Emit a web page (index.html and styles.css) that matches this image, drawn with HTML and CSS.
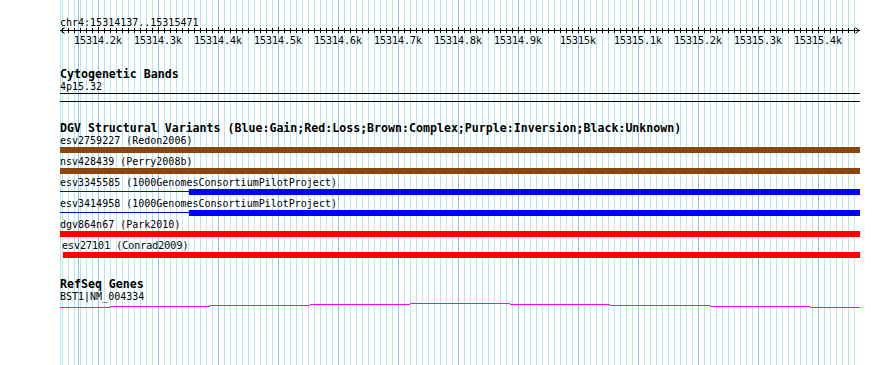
FILE: index.html
```html
<!DOCTYPE html>
<html lang="en">
<head>
    <meta charset="UTF-8">
    <title>chr4:15314137..15315471</title>
    <link rel="stylesheet" href="styles.css">
</head>
<body>
    <div class="browser">
        <div class="panel">
            <!-- Ruler -->
            <div class="ruler">
                <div class="ruler-name">chr4:15314137..15315471</div>
                <svg class="axis" width="800" height="8" viewBox="0 0 800 8">
                    <defs>
                        <pattern id="minorTicks" patternUnits="userSpaceOnUse" x="2" y="0" width="6" height="8">
                            <rect x="0" y="2" width="1" height="5" fill="#000"/>
                        </pattern>
                        <pattern id="majorTicks" patternUnits="userSpaceOnUse" x="38" y="0" width="60" height="8">
                            <rect x="0" y="1" width="1" height="6" fill="#000"/>
                        </pattern>
                    </defs>
                    <rect x="2" y="0" width="796" height="8" fill="url(#minorTicks)"/>
                    <rect x="2" y="0" width="796" height="8" fill="url(#majorTicks)"/>
                    <rect x="0" y="4" width="800" height="1" fill="#000"/>
                    <path d="M4.5 1.5L1 4.5L4.5 7.5M795.5 1.5L799 4.5L795.5 7.5" fill="none" stroke="#000"/>
                </svg>
                <div class="tick-labels">
                    <span>15314.2k</span>
                    <span>15314.3k</span>
                    <span>15314.4k</span>
                    <span>15314.5k</span>
                    <span>15314.6k</span>
                    <span>15314.7k</span>
                    <span>15314.8k</span>
                    <span>15314.9k</span>
                    <span>15315k</span>
                    <span>15315.1k</span>
                    <span>15315.2k</span>
                    <span>15315.3k</span>
                    <span>15315.4k</span>
                </div>
            </div>

            <!-- Cytogenetic Bands -->
            <div class="track cytobands">
                <div class="track-title">Cytogenetic Bands</div>
                <div class="feature-label">4p15.32</div>
                <div class="band"></div>
            </div>

            <!-- DGV -->
            <div class="track dgv">
                <div class="track-title">DGV Structural Variants (Blue:Gain;Red:Loss;Brown:Complex;Purple:Inversion;Black:Unknown)</div>
                <div class="feature">
                    <div class="feature-label">esv2759227 (Redon2006)</div>
                    <div class="bar complex"></div>
                </div>
                <div class="feature">
                    <div class="feature-label">nsv428439 (Perry2008b)</div>
                    <div class="bar complex"></div>
                </div>
                <div class="feature">
                    <div class="feature-label">esv3345585 (1000GenomesConsortiumPilotProject)</div>
                    <div class="bar gain">
                        <div class="stem"></div>
                        <div class="block"></div>
                    </div>
                </div>
                <div class="feature">
                    <div class="feature-label">esv3414958 (1000GenomesConsortiumPilotProject)</div>
                    <div class="bar gain">
                        <div class="stem"></div>
                        <div class="block"></div>
                    </div>
                </div>
                <div class="feature">
                    <div class="feature-label">dgv864n67 (Park2010)</div>
                    <div class="bar loss"></div>
                </div>
                <div class="feature shifted">
                    <div class="feature-label">esv27101 (Conrad2009)</div>
                    <div class="bar loss"></div>
                </div>
            </div>

            <!-- RefSeq -->
            <div class="track refseq">
                <div class="track-title">RefSeq Genes</div>
                <div class="feature-label">BST1|NM_004334</div>
                <svg class="gene" width="800" height="5" viewBox="0 0 800 5">
                    <path d="M0 4.5H50M50 3.5H150M150 2.5H250M250 1.5H350M350 0.5H450M450 1.5H550M550 2.5H650M650 3.5H750M750 4.5H800" fill="none" stroke="#f0f" stroke-width="1"/>
                </svg>
            </div>
        </div>
    </div>
</body>
</html>
```

FILE: styles.css
```css
body {
    margin: 0;
    background: #fff;
    color: #000;
    font-family: "DejaVu Sans Mono", "Liberation Mono", monospace;
    font-size: 10px;
    line-height: 13px;
}
.browser {
    width: 890px;
    height: 365px;
    padding-left: 60px;
    box-sizing: border-box;
    overflow: hidden;
}
.panel {
    width: 800px;
    height: 365px;
    white-space: nowrap;
    background-image:
        repeating-linear-gradient(to right, #8cc4ea 0 1px, transparent 1px 60px),
        repeating-linear-gradient(to right, #b2eaea 0 1px, transparent 1px 6px);
    background-position: 38px 0, 2px 0;
}

/* ruler */
.ruler {
    padding-top: 16px;
}
.ruler-name {
    height: 10px;
}
.axis {
    display: block;
    shape-rendering: crispEdges;
}
.axis path {
    shape-rendering: auto;
}
.tick-labels {
    display: flex;
    padding-left: 8px;
}
.tick-labels span {
    width: 60px;
    flex: none;
    text-align: center;
}

/* tracks */
.track-title {
    font-size: 11.6px;
    font-weight: bold;
    line-height: 15px;
    margin-bottom: -2px;
}
.cytobands {
    margin-top: 20px;
}
.band {
    height: 9px;
    box-sizing: border-box;
    border-top: 1px solid #000;
    border-bottom: 1px solid #000;
}
.dgv {
    margin-top: 19px;
}
.feature {
    margin-bottom: 2px;
}
.bar {
    height: 6px;
}
.bar.complex {
    background: #8b4513;
}
.bar.loss {
    background: #f00;
}
.bar.gain {
    display: flex;
    align-items: flex-start;
}
.gain .stem {
    width: 129px;
    height: 1px;
    margin-top: 2px;
    background: #00f;
}
.gain .block {
    flex: 1;
    height: 6px;
    background: #00f;
}
.shifted .feature-label {
    padding-left: 2px;
}
.shifted .bar {
    margin-left: 3px;
}
.refseq {
    margin-top: 19px;
}
.gene {
    display: block;
    shape-rendering: crispEdges;
}
```
